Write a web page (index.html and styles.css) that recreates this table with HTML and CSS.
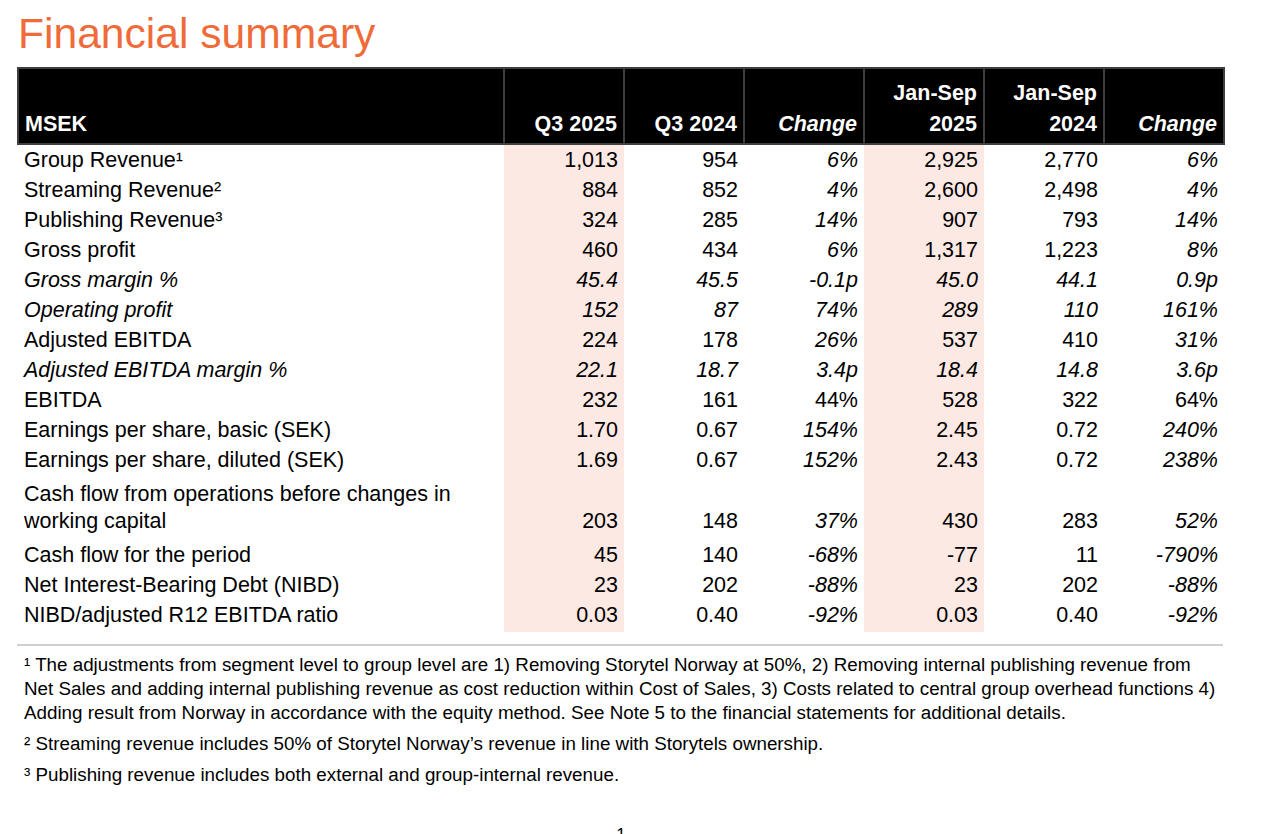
FILE: index.html
```html
<!DOCTYPE html>
<html lang="en">
<head>
<meta charset="utf-8">
<title>Financial summary</title>
<link rel="stylesheet" href="styles.css">
</head>
<body>
<div class="page">
  <h1 class="title">Financial summary</h1>
  <table class="fin">
    <colgroup>
      <col class="c-label">
      <col class="c-num"><col class="c-num"><col class="c-num">
      <col class="c-num"><col class="c-num"><col class="c-num">
    </colgroup>
    <thead>
      <tr>
        <th class="label">MSEK</th>
        <th>Q3 2025</th>
        <th>Q3 2024</th>
        <th class="chg">Change</th>
        <th>Jan-Sep<br>2025</th>
        <th>Jan-Sep<br>2024</th>
        <th class="chg">Change</th>
      </tr>
    </thead>
    <tbody>
      <tr><td class="label">Group Revenue¹</td><td class="hl">1,013</td><td>954</td><td class="chg">6%</td><td class="hl">2,925</td><td>2,770</td><td class="chg">6%</td></tr>
      <tr><td class="label">Streaming Revenue²</td><td class="hl">884</td><td>852</td><td class="chg">4%</td><td class="hl">2,600</td><td>2,498</td><td class="chg">4%</td></tr>
      <tr><td class="label">Publishing Revenue³</td><td class="hl">324</td><td>285</td><td class="chg">14%</td><td class="hl">907</td><td>793</td><td class="chg">14%</td></tr>
      <tr><td class="label">Gross profit</td><td class="hl">460</td><td>434</td><td class="chg">6%</td><td class="hl">1,317</td><td>1,223</td><td class="chg">8%</td></tr>
      <tr class="it"><td class="label">Gross margin %</td><td class="hl">45.4</td><td>45.5</td><td class="chg">-0.1p</td><td class="hl">45.0</td><td>44.1</td><td class="chg">0.9p</td></tr>
      <tr class="it"><td class="label">Operating profit</td><td class="hl">152</td><td>87</td><td class="chg">74%</td><td class="hl">289</td><td>110</td><td class="chg">161%</td></tr>
      <tr><td class="label">Adjusted EBITDA</td><td class="hl">224</td><td>178</td><td class="chg">26%</td><td class="hl">537</td><td>410</td><td class="chg">31%</td></tr>
      <tr class="it"><td class="label">Adjusted EBITDA margin %</td><td class="hl">22.1</td><td>18.7</td><td class="chg">3.4p</td><td class="hl">18.4</td><td>14.8</td><td class="chg">3.6p</td></tr>
      <tr><td class="label">EBITDA</td><td class="hl">232</td><td>161</td><td>44%</td><td class="hl">528</td><td>322</td><td>64%</td></tr>
      <tr><td class="label">Earnings per share, basic (SEK)</td><td class="hl">1.70</td><td>0.67</td><td class="chg">154%</td><td class="hl">2.45</td><td>0.72</td><td class="chg">240%</td></tr>
      <tr><td class="label">Earnings per share, diluted (SEK)</td><td class="hl">1.69</td><td>0.67</td><td class="chg">152%</td><td class="hl">2.43</td><td>0.72</td><td class="chg">238%</td></tr>
      <tr class="tall"><td class="label">Cash flow from operations before changes in working capital</td><td class="hl">203</td><td>148</td><td class="chg">37%</td><td class="hl">430</td><td>283</td><td class="chg">52%</td></tr>
      <tr><td class="label">Cash flow for the period</td><td class="hl">45</td><td>140</td><td class="chg">-68%</td><td class="hl">-77</td><td>11</td><td class="chg">-790%</td></tr>
      <tr><td class="label">Net Interest-Bearing Debt (NIBD)</td><td class="hl">23</td><td>202</td><td class="chg">-88%</td><td class="hl">23</td><td>202</td><td class="chg">-88%</td></tr>
      <tr class="last"><td class="label">NIBD/adjusted R12 EBITDA ratio</td><td class="hl">0.03</td><td>0.40</td><td class="chg">-92%</td><td class="hl">0.03</td><td>0.40</td><td class="chg">-92%</td></tr>
    </tbody>
  </table>
  <div class="notes">
    <p>¹ The adjustments from segment level to group level are 1) Removing Storytel Norway at 50%, 2) Removing internal publishing revenue from Net Sales and adding internal publishing revenue as cost reduction within Cost of Sales, 3) Costs related to central group overhead functions 4) Adding result from Norway in accordance with the equity method. See Note 5 to the financial statements for additional details.</p>
    <p>² Streaming revenue includes 50% of Storytel Norway’s revenue in line with Storytels ownership.</p>
    <p>³ Publishing revenue includes both external and group-internal revenue.</p>
  </div>
  <div class="pageno">1</div>
</div>
</body>
</html>
```

FILE: styles.css
```css
html, body {
  margin: 0;
  padding: 0;
  background: #fff;
}

body {
  width: 1278px;
  height: 834px;
  overflow: hidden;
  font-family: "Liberation Sans", Arial, Helvetica, sans-serif;
  color: #000;
}

.page {
  padding: 9px 0 0 0;
}

.title {
  margin: 0 0 10px 18px;
  font-size: 42.6px;
  line-height: 48px;
  font-weight: normal;
  color: #ef6b3a;
  letter-spacing: 0;
}

.fin {
  margin-left: 17px;
  width: 1206px;
  border-collapse: collapse;
  table-layout: fixed;
  font-size: 21.5px;
}

.c-label { width: 486px; }
.c-num { width: 120px; }

.fin thead th {
  background: #000;
  color: #fff;
  border: 2px solid #3f3f3f;
  height: 71px;
  padding: 0 6px 3px 6px;
  vertical-align: bottom;
  text-align: right;
  font-weight: bold;
  line-height: 31px;
  white-space: nowrap;
}

.fin thead th.label {
  text-align: left;
  padding-left: 6px;
}

.fin thead th.chg {
  font-style: italic;
}

.fin tbody td {
  height: 30px;
  padding: 0 6px;
  line-height: 30px;
  text-align: right;
  vertical-align: middle;
  white-space: nowrap;
}

.fin tbody td.label {
  text-align: left;
  padding-left: 6px;
}

.fin tbody td.hl {
  background: #fce9e3;
}

.fin tbody td.chg,
.fin tbody tr.it td {
  font-style: italic;
}

.fin tbody tr.tall td {
  height: 54px;
  padding-top: 6px;
  padding-bottom: 5px;
  line-height: 27px;
  vertical-align: bottom;
}

.fin tbody tr.tall td.label {
  white-space: normal;
  padding-right: 40px;
}

.fin tbody tr.last td {
  padding-bottom: 2px;
}

.notes {
  margin: 12px 0 0 17px;
  width: 1206px;
  border-top: 2px solid #cfcfcf;
  padding: 7px 0 0 7px;
  box-sizing: border-box;
  font-size: 18.8px;
  line-height: 24px;
}

.notes p {
  margin: 0 0 7px 0;
}

.pageno {
  margin-top: 36px;
  text-align: center;
  font-size: 17px;
  padding-right: 36px;
  line-height: 24px;
}
```
